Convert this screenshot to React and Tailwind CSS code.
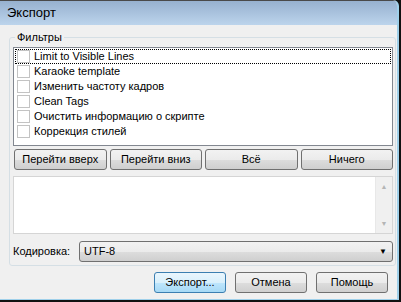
import { useState } from 'react'

const font = { fontFamily: '"Liberation Sans", Arial, sans-serif' }

const items = [
  'Limit to Visible Lines',
  'Karaoke template',
  'Изменить частоту кадров',
  'Clean Tags',
  'Очистить информацию о скрипте',
  'Коррекция стилей',
]

const Button = ({ children, primary = false, className = '' }) => (
  <button
    className={`h-[21px] rounded-[3px] border text-[11px] leading-none text-black ${
      primary
        ? 'border-[#3c7fb1] bg-[linear-gradient(#eaf6fd_0%,#d9f0fc_50%,#bee6fd_51%,#a7d9f5_100%)]'
        : 'border-[#707070] bg-[linear-gradient(#f2f2f2_0%,#ebebeb_50%,#dddddd_51%,#cfcfcf_100%)]'
    } ${className}`}
  >
    {children}
  </button>
)

const ListRow = ({ label, focused }) => {
  const [checked, setChecked] = useState(false)
  return (
    <div
      onClick={() => setChecked(!checked)}
      className={`flex h-[15px] items-center gap-[4px] pl-[2px] ${focused ? 'outline outline-1 outline-dotted outline-black -outline-offset-1' : ''}`}
    >
      <span className="flex h-[13px] w-[13px] shrink-0 items-center justify-center border border-[#c3c3c3] bg-white text-[10px] leading-none">
        {checked ? '✓' : ''}
      </span>
      <span className="text-[11px] leading-none text-black">{label}</span>
    </div>
  )
}

export default function App() {
  return (
    <div className="h-[302px] w-[401px] overflow-hidden bg-[#111]" style={font}>
      <div className="flex h-[300px] w-[399px] flex-col overflow-hidden rounded-tr-[6px] border-r-2 border-b border-[#9fd0ea] bg-[#f0f0f0]">
        {/* title bar */}
        <div className="flex h-[25px] shrink-0 items-center border-t border-[#4a4a4a] bg-[linear-gradient(#97b1cf,#bcd4ec)] pl-[7px] text-[13px] text-black">
          Экспорт
        </div>

        <div className="flex flex-col pl-[9px] pr-[1px]">
          <fieldset className="mt-[5px] rounded-[3px] border border-[#d5dfe5] pt-[3px] pr-[2px] pb-[3px] pl-[3px]">
            <legend className="ml-[2px] px-[2px] text-[11px] leading-[14px] text-black">Фильтры</legend>

            {/* check list */}
            <div className="h-[99px] w-[380px] border border-[#828790] bg-white pt-[1px] pl-[1px] pr-[1px]">
              {items.map((t, i) => (
                <ListRow key={t} label={t} focused={i === 0} />
              ))}
            </div>

            <div className="mt-[3px] grid w-[380px] grid-cols-4 gap-[3px] pl-[1px]">
              <Button>Перейти вверх</Button>
              <Button>Перейти вниз</Button>
              <Button>Всё</Button>
              <Button>Ничего</Button>
            </div>

            {/* info text area */}
            <div className="mt-[6px] flex h-[58px] w-[380px] border border-[#d5d5d5] bg-white">
              <div className="flex-1" />
              <div className="flex w-[17px] flex-col items-center justify-between border-l border-[#e8e8e8] bg-[#f0f0f0] py-[6px] text-[7px] leading-none text-[#b5b5b5]">
                <span>▲</span>
                <span>▼</span>
              </div>
            </div>

            <div className="mt-[7px] flex items-center">
              <span className="w-[66px] text-[11px] text-black">Кодировка:</span>
              <div className="flex h-[21px] flex-1 items-center justify-between rounded-[3px] border border-[#707070] bg-[linear-gradient(#f2f2f2_0%,#ebebeb_50%,#dddddd_51%,#cfcfcf_100%)] pr-[5px] pl-[4px] text-[11px] text-black">
                <span>UTF-8</span>
                <span className="text-[8px]">▼</span>
              </div>
            </div>
          </fieldset>

          <div className="mt-[6px] flex justify-end gap-[9px] pr-[8px]">
            <Button primary className="w-[72px]">Экспорт...</Button>
            <Button className="w-[72px]">Отмена</Button>
            <Button className="w-[72px]">Помощь</Button>
          </div>
        </div>
      </div>
    </div>
  )
}
